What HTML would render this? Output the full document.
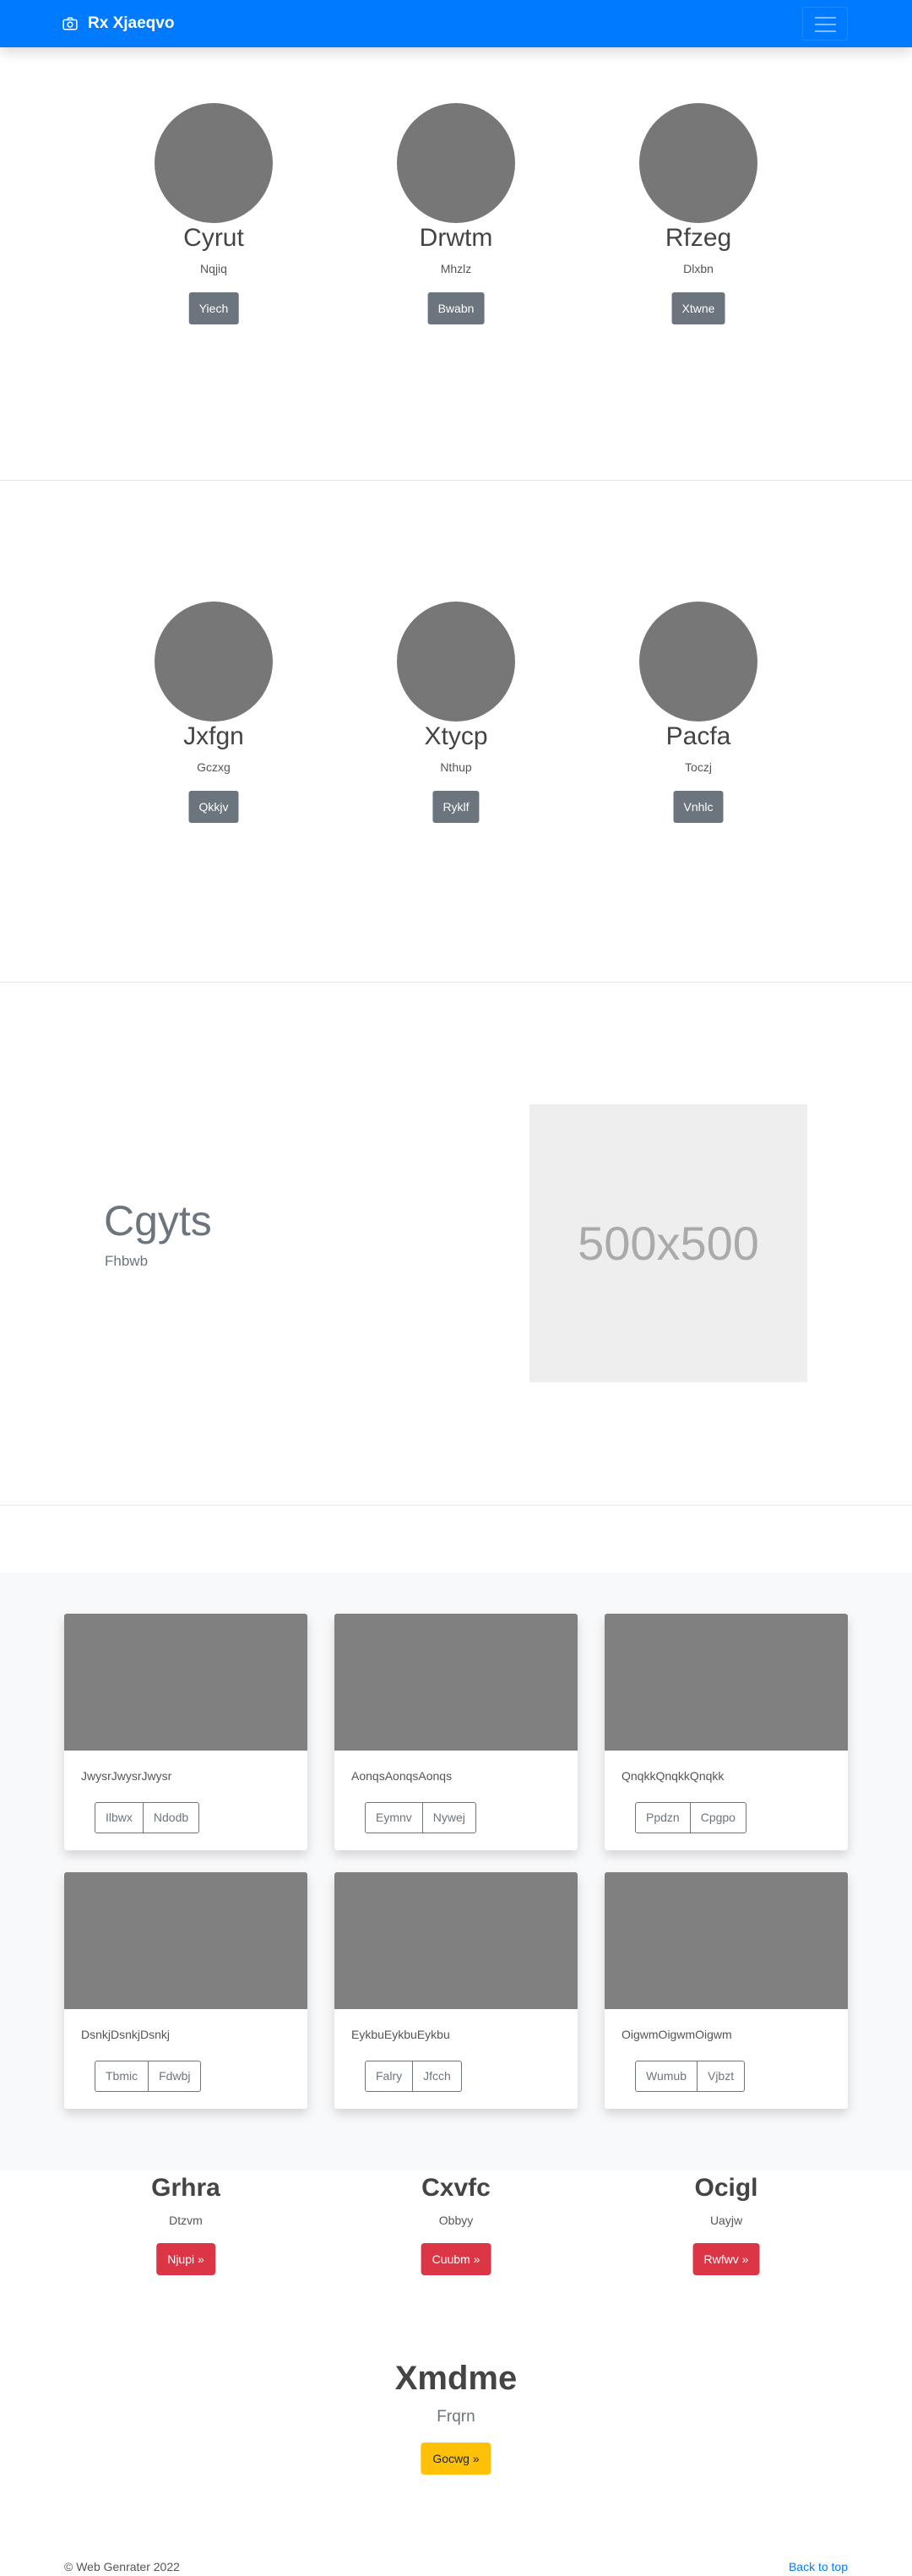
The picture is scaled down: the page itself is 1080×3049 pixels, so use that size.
<!DOCTYPE html>
<html><head><meta charset="utf-8"><style>
*{box-sizing:border-box;margin:0;padding:0}
body{width:1080px;height:3049px;position:relative;font-family:"Liberation Sans",sans-serif;color:#555;background:#fff;overflow:hidden}
.a{position:absolute}
.c{text-align:center;transform:translateX(-50%);white-space:nowrap}
.nav{left:0;top:0;width:1080px;height:56px;background:#007bff;box-shadow:0 6px 14px rgba(0,0,0,.15);z-index:2}
.circ{width:140px;height:142px;border-radius:50%;background:#777}
.t1{font-size:30px;color:#444;line-height:1}
.s1{font-size:14px;color:#555;line-height:1}
.bs{background:#6c757d;color:#fff;font-size:14px;border-radius:3px;height:38px;line-height:38px;padding:0 12px}
hr.a{border:0;border-top:1px solid #e5e5e5;left:0;width:1080px}
.card{background:#fff;width:288px;height:280px;box-shadow:0 6px 12px rgba(0,0,0,.15);border-radius:3px;overflow:hidden}
.card .im{height:162px;background:#808080}
.card .tx{position:absolute;left:20px;top:184px;font-size:14px;color:#555}
.bg{position:absolute;left:36px;top:223px;height:37px;border:1px solid #6c757d;border-radius:3px;display:flex;font-size:14px;color:#6c757d}
.bg span{padding:0 12px;line-height:35px}
.bg span+span{border-left:1px solid #6c757d}
.t3{font-size:30px;font-weight:bold;color:#444;line-height:1}
.br{background:#dc3545;color:#fff;font-size:14px;border-radius:4px;height:38px;line-height:38px;padding:0 13px}
</style></head><body>
<div class="a nav">
 <svg class="a" style="left:74px;top:19px" width="18" height="18" viewBox="0 0 16 16" fill="none" stroke="#fff" stroke-width="1.3"><rect x="1" y="4" width="14" height="10" rx="1.5"/><path d="M5 4l1.2-2h3.6L11 4"/><circle cx="8" cy="9" r="2.6"/></svg>
 <div class="a" style="left:104px;top:17px;color:#fff;font-size:19px;font-weight:bold;line-height:22px">Rx Xjaeqvo</div>
 <div class="a" style="left:950px;top:8px;width:54px;height:40px;border:1px solid rgba(255,255,255,.12);border-radius:4px">
  <div class="a" style="left:14px;top:11px;width:25px;height:2px;background:rgba(255,255,255,.5)"></div>
  <div class="a" style="left:14px;top:19px;width:25px;height:2px;background:rgba(255,255,255,.5)"></div>
  <div class="a" style="left:14px;top:27px;width:25px;height:2px;background:rgba(255,255,255,.5)"></div>
 </div>
</div>

<div class="a circ" style="left:183px;top:122px"></div>
<div class="a circ" style="left:470px;top:122px"></div>
<div class="a circ" style="left:757px;top:122px"></div>
<div class="a c t1" style="left:253px;top:267px">Cyrut</div>
<div class="a c t1" style="left:540px;top:267px">Drwtm</div>
<div class="a c t1" style="left:827px;top:267px">Rfzeg</div>
<div class="a c s1" style="left:253px;top:311px">Nqjiq</div>
<div class="a c s1" style="left:540px;top:311px">Mhzlz</div>
<div class="a c s1" style="left:827px;top:311px">Dlxbn</div>
<div class="a c bs" style="left:253px;top:346px">Yiech</div>
<div class="a c bs" style="left:540px;top:346px">Bwabn</div>
<div class="a c bs" style="left:827px;top:346px">Xtwne</div>
<hr class="a" style="top:568px">

<div class="a circ" style="left:183px;top:712px"></div>
<div class="a circ" style="left:470px;top:712px"></div>
<div class="a circ" style="left:757px;top:712px"></div>
<div class="a c t1" style="left:253px;top:857px">Jxfgn</div>
<div class="a c t1" style="left:540px;top:857px">Xtycp</div>
<div class="a c t1" style="left:827px;top:857px">Pacfa</div>
<div class="a c s1" style="left:253px;top:901px">Gczxg</div>
<div class="a c s1" style="left:540px;top:901px">Nthup</div>
<div class="a c s1" style="left:827px;top:901px">Toczj</div>
<div class="a c bs" style="left:253px;top:936px">Qkkjv</div>
<div class="a c bs" style="left:540px;top:936px">Ryklf</div>
<div class="a c bs" style="left:827px;top:936px">Vnhlc</div>
<hr class="a" style="top:1162px">

<div class="a" style="left:123px;top:1418px;font-size:50px;color:#6c757d;line-height:1.1">Cgyts</div>
<div class="a" style="left:124px;top:1484px;font-size:17px;color:#6c757d;line-height:1.1">Fhbwb</div>
<div class="a" style="left:627px;top:1307px;width:329px;height:329px;background:#eee;color:#aaa;font-size:56px;line-height:329px;text-align:center">500x500</div>
<hr class="a" style="top:1781px">

<div class="a" style="left:0;top:1861px;width:1080px;height:708px;background:#f8f9fa"></div>
<div class="a card" style="left:76px;top:1910px"><div class="im"></div><div class="tx">JwysrJwysrJwysr</div><div class="bg"><span>Ilbwx</span><span>Ndodb</span></div></div>
<div class="a card" style="left:396px;top:1910px"><div class="im"></div><div class="tx">AonqsAonqsAonqs</div><div class="bg"><span>Eymnv</span><span>Nywej</span></div></div>
<div class="a card" style="left:716px;top:1910px"><div class="im"></div><div class="tx">QnqkkQnqkkQnqkk</div><div class="bg"><span>Ppdzn</span><span>Cpgpo</span></div></div>
<div class="a card" style="left:76px;top:2216px"><div class="im"></div><div class="tx">DsnkjDsnkjDsnkj</div><div class="bg"><span>Tbmic</span><span>Fdwbj</span></div></div>
<div class="a card" style="left:396px;top:2216px"><div class="im"></div><div class="tx">EykbuEykbuEykbu</div><div class="bg"><span>Falry</span><span>Jfcch</span></div></div>
<div class="a card" style="left:716px;top:2216px"><div class="im"></div><div class="tx">OigwmOigwmOigwm</div><div class="bg"><span>Wumub</span><span>Vjbzt</span></div></div>

<div class="a c t3" style="left:220px;top:2575px">Grhra</div>
<div class="a c t3" style="left:540px;top:2575px">Cxvfc</div>
<div class="a c t3" style="left:860px;top:2575px">Ocigl</div>
<div class="a c s1" style="left:220px;top:2621px">Dtzvm</div>
<div class="a c s1" style="left:540px;top:2621px">Obbyy</div>
<div class="a c s1" style="left:860px;top:2621px">Uayjw</div>
<div class="a c br" style="left:220px;top:2655px">Njupi »</div>
<div class="a c br" style="left:540px;top:2655px">Cuubm »</div>
<div class="a c br" style="left:860px;top:2655px">Rwfwv »</div>

<div class="a c" style="left:540px;top:2795px;font-size:40px;font-weight:bold;color:#444;line-height:1">Xmdme</div>
<div class="a c" style="left:540px;top:2851px;font-size:19px;color:#6c757d;line-height:1.1">Frqrn</div>
<div class="a c" style="left:540px;top:2891px;background:#ffc107;color:#212529;font-size:14px;border-radius:4px;height:38px;line-height:38px;padding:0 14px">Gocwg »</div>

<div class="a" style="left:76px;top:3030px;font-size:14px;color:#555;line-height:1.2">© Web Genrater 2022</div>
<div class="a" style="right:76px;top:3030px;font-size:14px;color:#007bff;line-height:1.2">Back to top</div>
</body></html>
